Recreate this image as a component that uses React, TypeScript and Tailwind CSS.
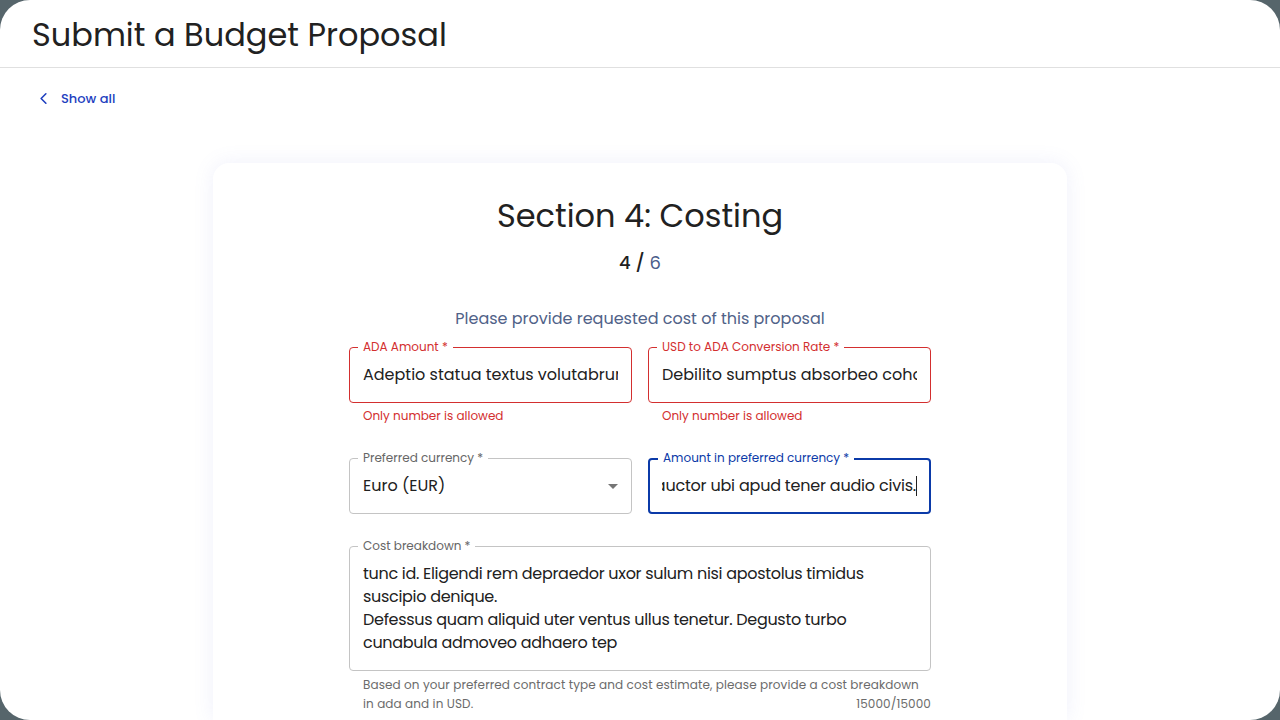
import { ChevronLeft } from "lucide-react";

const font = { fontFamily: "Poppins, Inter, 'Noto Sans', sans-serif" };

function Outlined({
  label,
  children,
  error,
  focused,
  className = "",
}: {
  label: string;
  children: React.ReactNode;
  error?: boolean;
  focused?: boolean;
  className?: string;
}) {
  const border = error
    ? "border border-[#d32f2f]"
    : focused
    ? "border-2 border-[#0b3aa8]"
    : "border border-[#c4c4c4]";
  const labelColor = error ? "text-[#d32f2f]" : focused ? "text-[#0b3aa8]" : "text-[#666666]";
  return (
    <div className={`relative rounded ${border} ${className}`}>
      <span
        className={`absolute bg-white px-[5px] text-[12px] leading-[16px] ${labelColor} ${
          focused ? "-top-[10px] left-[8px]" : "-top-[9px] left-[8px]"
        }`}
      >
        {label}
      </span>
      {children}
    </div>
  );
}

export default function App() {
  return (
    <div className="h-[720px] w-[1280px] overflow-hidden bg-[#56656b]" style={font}>
      <div className="flex h-full flex-col overflow-hidden rounded-[30px] bg-white">
        <header className="h-[68px] shrink-0 border-b border-[#e0e0e0] px-8 pt-[14px]">
          <h1 className="text-[32px] leading-[42px] text-[#212121]">Submit a Budget Proposal</h1>
        </header>

        <div className="px-[34px] pt-[21px]">
          <a className="flex items-center gap-[8px] text-[13px] font-medium text-[#1e3fbf]">
            <ChevronLeft className="h-[19px] w-[19px]" strokeWidth={2} />
            Show all
          </a>
        </div>

        <div className="flex flex-1 justify-center pt-[54px]">
          <div className="w-[854px] rounded-t-2xl bg-white pt-[32px] shadow-[0_0_20px_rgba(120,130,220,0.12)]">
            <h2 className="text-center text-[32px] leading-[42px] text-[#212121]">Section 4: Costing</h2>
            <div className="mt-[14px] text-center text-[18px] leading-6 text-[#212121]">
              <span className="font-medium">4 /</span> <span className="text-[#4a5d8a]">6</span>
            </div>

            <p className="mt-[32px] text-center text-[16px] leading-6 text-[#506288]">
              Please provide requested cost of this proposal
            </p>

            <div className="mx-auto mt-[16px] w-[582px]">
              <div className="grid grid-cols-2 gap-4">
                <div>
                  <Outlined label="ADA Amount *" error className="h-[56px]">
                    <div className="flex h-full items-center px-[13px] pt-px">
                      <div className="overflow-hidden whitespace-nowrap text-[16px] text-[#212121]">
                        Adeptio statua textus volutabrum
                      </div>
                    </div>
                  </Outlined>
                  <p className="mt-[3px] px-[14px] text-[12px] leading-5 text-[#d32f2f]">Only number is allowed</p>
                </div>
                <div>
                  <Outlined label="USD to ADA Conversion Rate *" error className="h-[56px]">
                    <div className="flex h-full items-center px-[13px] pt-px">
                      <div className="overflow-hidden whitespace-nowrap text-[16px] text-[#212121]">
                        Debilito sumptus absorbeo cohors
                      </div>
                    </div>
                  </Outlined>
                  <p className="mt-[3px] px-[14px] text-[12px] leading-5 text-[#d32f2f]">Only number is allowed</p>
                </div>
              </div>

              <div className="mt-[32px] grid grid-cols-2 gap-4">
                <Outlined label="Preferred currency *" className="h-[56px]">
                  <div className="flex h-full items-center justify-between pl-[13px] pr-[13px] pt-px text-[16px] text-[#212121]">
                    <span>Euro (EUR)</span>
                    <svg width="10" height="5" viewBox="0 0 10 5">
                      <path d="M0 0 L10 0 L5 5 Z" fill="#757575" />
                    </svg>
                  </div>
                </Outlined>
                <Outlined label="Amount in preferred currency *" focused className="h-[56px]">
                  <div className="flex h-full items-center px-[12px] pt-px">
                    <div className="flex min-w-0 flex-1 items-center justify-end overflow-hidden whitespace-nowrap text-[16px] tracking-[-0.2px] text-[#212121]">
                      <span className="shrink-0">ut auctor ubi apud tener audio civis.</span>
                      <span className="h-[20px] w-px shrink-0 bg-[#212121]" />
                    </div>
                  </div>
                </Outlined>
              </div>

              <Outlined label="Cost breakdown *" className="mt-[32px] h-[125px]">
                <div className="px-[13px] pt-[15px] text-[16px] leading-[23px] tracking-[-0.3px] text-[#212121]">
                  <div className="whitespace-nowrap">tunc id. Eligendi rem depraedor uxor sulum nisi apostolus timidus</div>
                  <div className="whitespace-nowrap">suscipio denique.</div>
                  <div className="whitespace-nowrap">Defessus quam aliquid uter ventus ullus tenetur. Degusto turbo</div>
                  <div className="whitespace-nowrap">cunabula admoveo adhaero tep</div>
                </div>
              </Outlined>

              <div className="mt-[4px] pl-[14px] text-[12px] leading-[19px] tracking-[0.1px] text-[#6b6b6b]">
                <p className="whitespace-nowrap">
                  Based on your preferred contract type and cost estimate, please provide a cost breakdown
                </p>
                <div className="flex justify-between">
                  <span>in ada and in USD.</span>
                  <span>15000/15000</span>
                </div>
              </div>
            </div>
          </div>
        </div>
      </div>
    </div>
  );
}
